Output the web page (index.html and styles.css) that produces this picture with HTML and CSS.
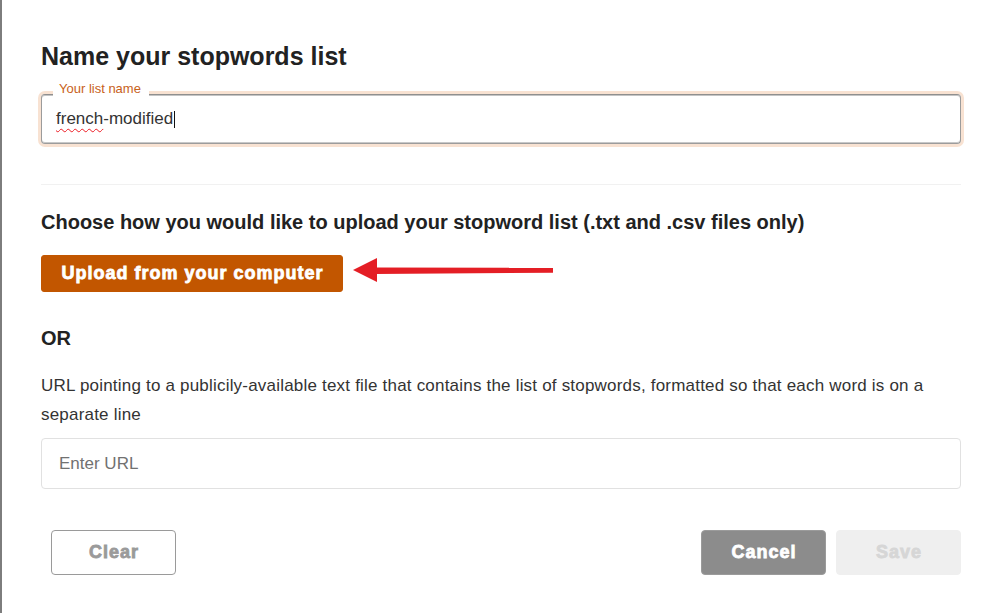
FILE: index.html
```html
<!DOCTYPE html>
<html lang="en">
<head>
<meta charset="utf-8">
<title>Name your stopwords list</title>
<link rel="stylesheet" href="styles.css">
</head>
<body>
<div class="page">
  <h1 class="title">Name your stopwords list</h1>
  <div class="name-field">
    <span class="name-label">Your list name</span>
    <div class="name-value"><span class="misspelled">french</span>-modified<span class="caret"></span></div>
  </div>
  <div class="divider"></div>
  <h2 class="section-title">Choose how you would like to upload your stopword list (.txt and .csv files only)</h2>
  <div class="upload-row">
    <button class="btn btn-upload" type="button">Upload from your computer</button>
    <svg class="arrow" width="202" height="37" viewBox="0 0 202 37" aria-hidden="true">
      <polygon points="0,15 24,3 24,27" fill="#e41e25"/>
      <polygon points="22,12.4 200,12.8 200,17.8 22,19" fill="#e41e25"/>
    </svg>
  </div>
  <h2 class="or">OR</h2>
  <p class="desc">URL pointing to a publicily-available text file that contains the list of stopwords, formatted so that each word is on a separate line</p>
  <input class="url-input" type="text" placeholder="Enter URL">
  <div class="actions">
    <button class="btn btn-clear" type="button">Clear</button>
    <div class="actions-right">
      <button class="btn btn-cancel" type="button">Cancel</button>
      <button class="btn btn-save" type="button">Save</button>
    </div>
  </div>
</div>
</body>
</html>
```
FILE: styles.css
```css
html, body {
  margin: 0;
  padding: 0;
  background: #ffffff;
}

body {
  font-family: "Liberation Sans", Arial, sans-serif;
  color: #333333;
}

.page {
  box-sizing: border-box;
  min-height: 613px;
  border-left: 2px solid #7d7d7d;
  padding: 42px 37px 0 39px;
}

.title {
  margin: 0;
  font-size: 25px;
  line-height: 28px;
  font-weight: bold;
  color: #222222;
}

.name-field {
  position: relative;
  box-sizing: border-box;
  height: 50px;
  margin-top: 24px;
  border: 1px solid #9c9c9c;
  border-top-color: #8f8f8f;
  border-radius: 4px;
  box-shadow: 0 0 0 3px #f8e2d2, inset 0 1px 0 #c4c4c4, inset 0 -1px 0 #c8c8c8;
  padding: 0 14px;
  display: flex;
  align-items: center;
}

.name-label {
  position: absolute;
  top: -13px;
  left: 11px;
  padding: 0 8px 0 6px;
  background: #ffffff;
  font-size: 13px;
  line-height: 14px;
  color: #c8611b;
}

.name-value {
  font-size: 17px;
  line-height: 20px;
  color: #333333;
  display: flex;
  align-items: center;
  white-space: pre;
}

.misspelled {
  text-decoration: underline wavy #ec1c24;
  text-decoration-thickness: 1.4px;
  text-underline-offset: 4px;
}

.caret {
  display: inline-block;
  width: 0;
  height: 17px;
  border-left: 1px solid #111111;
  margin-left: 1px;
}

.divider {
  height: 1px;
  margin-top: 40px;
  background: #f1f1f1;
}

.section-title {
  margin: 26px 0 0;
  font-size: 20px;
  line-height: 22px;
  font-weight: bold;
  color: #222222;
}

.upload-row {
  margin-top: 22px;
  display: flex;
  align-items: center;
  gap: 10px;
}

.arrow {
  display: block;
  flex: none;
}

.btn {
  box-sizing: border-box;
  font-family: "Liberation Sans", Arial, sans-serif;
  font-size: 18px;
  font-weight: bold;
  letter-spacing: 1px;
  border-radius: 4px;
  cursor: pointer;
  padding: 0 0 0 1px;
  margin: 0;
}

.btn-upload {
  width: 302px;
  height: 37px;
  background: #c25600;
  border: 1px solid #c25600;
  border-radius: 3px;
  color: #ffffff;
  -webkit-text-stroke: 0.8px #ffffff;
}

.or {
  margin: 35px 0 0;
  font-size: 20px;
  line-height: 22px;
  font-weight: bold;
  color: #222222;
}

.desc {
  margin: 22px 0 0;
  font-size: 17px;
  letter-spacing: 0.2px;
  line-height: 29px;
  color: #333333;
}

.url-input {
  display: block;
  box-sizing: border-box;
  width: 100%;
  height: 51px;
  margin-top: 9px;
  padding: 0 17px;
  border: 1px solid #e1e1e1;
  border-radius: 4px;
  font-family: "Liberation Sans", Arial, sans-serif;
  font-size: 17px;
  color: #333333;
  background: #ffffff;
  outline: none;
}

.url-input::placeholder {
  color: #717171;
  opacity: 1;
}

.actions {
  margin-top: 41px;
  padding-left: 10px;
  display: flex;
  justify-content: space-between;
  align-items: center;
}

.actions-right {
  display: flex;
  gap: 10px;
}

.btn-clear,
.btn-cancel,
.btn-save {
  width: 125px;
  height: 45px;
}

.btn-clear {
  background: #ffffff;
  border: 1px solid #9a9a9a;
  color: #9a9a9a;
  -webkit-text-stroke: 0.8px #9a9a9a;
}

.btn-cancel {
  background: #8c8c8c;
  border: 1px solid #9b9b9b;
  color: #ffffff;
  -webkit-text-stroke: 0.8px #ffffff;
}

.btn-save {
  background: #efefef;
  border: 1px solid #efefef;
  color: #d6d6d6;
  -webkit-text-stroke: 0.8px #d6d6d6;
  cursor: default;
}
```
